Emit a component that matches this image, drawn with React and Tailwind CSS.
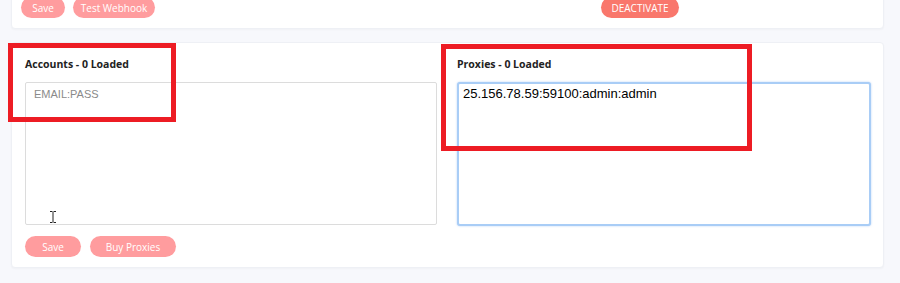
import React from "react";

const uiFont = { fontFamily: "'Open Sans', 'Noto Sans', sans-serif" };

function PinkButton({ children, className = "" }) {
  return (
    <button
      className={`h-[21px] rounded-full bg-[#ff9c9e] text-[10px] font-medium text-white leading-none ${className}`}
      style={uiFont}
    >
      {children}
    </button>
  );
}

export default function App() {
  return (
    <div className="relative h-[283px] w-[900px] overflow-hidden bg-[#f7f8fc]">
      <div className="-mt-[14px] pl-[11px] pr-[16px]">
        {/* top card (scrolled) */}
        <div className="flex items-center rounded-[4px] border border-[#eef0f5] bg-white pt-[10px] pb-[10px] pl-[9px] shadow-[0_1px_2px_rgba(0,0,0,0.03)]">
          <PinkButton className="w-[44px]">Save</PinkButton>
          <PinkButton className="ml-[8px] w-[82px]">Test Webhook</PinkButton>
          <button
            className="ml-[446px] h-[21px] w-[78px] rounded-full bg-[#f9776c] text-[10px] font-medium leading-none text-white"
            style={uiFont}
          >
            DEACTIVATE
          </button>
        </div>

        {/* accounts / proxies card */}
        <div className="mt-[13px] h-[226px] rounded-[4px] border border-[#eef0f5] bg-white pl-[13px] pr-[12px] pt-[14px] shadow-[0_1px_2px_rgba(0,0,0,0.03)]">
          <div className="grid grid-cols-[412px_414px] gap-x-[20px]">
            <div className="flex flex-col">
              <div
                className="h-[14px] text-[10.5px] font-bold leading-[14px] text-[#222]"
                style={uiFont}
              >
                Accounts - 0 Loaded
              </div>
              <div className="relative mt-[11px] h-[143px] rounded-[2px] border border-[#dcdcdc] bg-white px-[8px] pt-[5px]">
                <div
                  className="text-[11px] leading-[13px] text-[#8a8a8a]"
                  style={{ fontFamily: "'Liberation Sans', Arial, sans-serif" }}
                >
                  EMAIL:PASS
                </div>
                <svg
                  className="absolute left-[23px] top-[128px]"
                  width="8"
                  height="12"
                  viewBox="0 0 8 12"
                >
                  <path
                    d="M1 0.5h2.5M4.5 0.5H7M4 1v10M1 11.5h2.5M4.5 11.5H7"
                    stroke="#222"
                    strokeWidth="1"
                    fill="none"
                  />
                </svg>
              </div>
              <div className="mt-[11px] flex">
                <PinkButton className="w-[56px]">Save</PinkButton>
                <PinkButton className="ml-[9px] w-[86px]">Buy Proxies</PinkButton>
              </div>
            </div>
            <div className="flex flex-col">
              <div
                className="h-[14px] text-[10.5px] font-bold leading-[14px] text-[#222]"
                style={uiFont}
              >
                Proxies - 0 Loaded
              </div>
              <div className="mt-[11px] h-[144px] rounded-[3px] border-2 border-[#a9cdf6] bg-white pl-[4px] pr-[5px] pt-[2px] shadow-[0_0_2px_rgba(120,170,240,0.6)]">
                <div
                  className="text-[13px] leading-[15px] text-black"
                  style={{ fontFamily: "'Liberation Sans', Arial, sans-serif" }}
                >
                  25.156.78.59:59100:admin:admin
                </div>
              </div>
            </div>
          </div>
        </div>
      </div>

      {/* annotation boxes */}
      <div className="pointer-events-none absolute left-[8px] top-[43px] h-[79px] w-[168px] border-[5px] border-[#ed1c24]" />
      <div className="pointer-events-none absolute left-[441px] top-[44px] h-[107px] w-[311px] border-[5px] border-[#ed1c24]" />
    </div>
  );
}
